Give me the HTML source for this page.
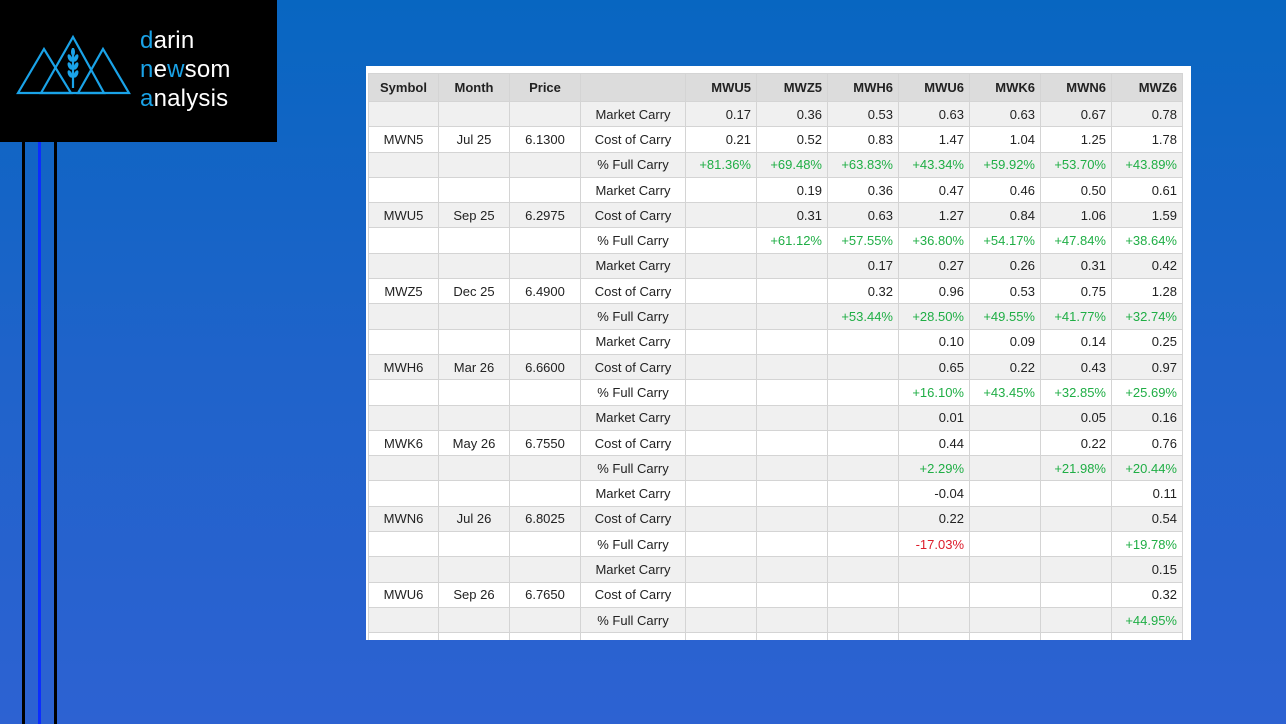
<!DOCTYPE html>
<html><head><style>
html,body{margin:0;padding:0;width:1286px;height:724px;overflow:hidden}
body{background:linear-gradient(180deg,#0866c1 0%,#1f63ca 50%,#2d62d2 100%);position:relative;font-family:"Liberation Sans",sans-serif}
.logo{position:absolute;left:0;top:0;width:277px;height:142px;background:#000}
.logo .t{position:absolute;left:140px;top:26px;color:#fff;font-size:24px;line-height:29px;letter-spacing:0.2px}
.logo .t b{font-weight:normal;color:#1aa3e8}
.v{position:absolute;top:142px;bottom:0;width:3px}
.box{position:absolute;left:366px;top:66px;width:825px;height:574px;background:#fff;overflow:hidden}
table{position:absolute;left:2px;top:7px;border-collapse:collapse;font-size:13px;color:#222;table-layout:fixed}
td,th{border:1px solid #d4d4d4;height:24.3px;padding:0 5px;white-space:nowrap}
th{background:#dcdcdc;height:27px;font-weight:bold;color:#222}
tr:nth-child(even) td{background:#f0f0f0}
td.c,th.c{text-align:center}
td.r,th.r{text-align:right}
.g{color:#1fae45}.n{color:#dd1c2a}
</style></head><body>
<div class="logo">
<svg width="140" height="142" style="position:absolute;left:0;top:0">
<g fill="none" stroke="#1aa3e8" stroke-width="2.2">
<polygon points="18,93 44,49 71,93"/>
<polygon points="41,93 73,37 104,93"/>
<polygon points="78,93 103,49 129,93"/>
<line x1="73" y1="48" x2="73" y2="88"/>
</g>
<g fill="#1aa3e8">
<ellipse cx="73" cy="52" rx="2" ry="4"/>
<ellipse cx="70" cy="58" rx="2" ry="4" transform="rotate(-25 70 58)"/><ellipse cx="76" cy="58" rx="2" ry="4" transform="rotate(25 76 58)"/>
<ellipse cx="70" cy="66" rx="2" ry="4" transform="rotate(-25 70 66)"/><ellipse cx="76" cy="66" rx="2" ry="4" transform="rotate(25 76 66)"/>
<ellipse cx="70" cy="74" rx="2" ry="4" transform="rotate(-25 70 74)"/><ellipse cx="76" cy="74" rx="2" ry="4" transform="rotate(25 76 74)"/>
</g></svg>
<div class="t"><b>d</b>arin<br><b>n</b>e<b>w</b>som<br><b>a</b>nalysis</div>
</div>
<div class="v" style="left:22px;background:#000"></div>
<div class="v" style="left:38px;background:#0b2cff"></div>
<div class="v" style="left:54px;background:#000"></div>
<div class="box">
<table>
<colgroup><col style="width:70px"><col style="width:71px"><col style="width:71px"><col style="width:105px"><col style="width:71px"><col style="width:71px"><col style="width:71px"><col style="width:71px"><col style="width:71px"><col style="width:71px"><col style="width:71px"></colgroup>
<tr><th class="c">Symbol</th><th class="c">Month</th><th class="c">Price</th><th></th><th class="r">MWU5</th><th class="r">MWZ5</th><th class="r">MWH6</th><th class="r">MWU6</th><th class="r">MWK6</th><th class="r">MWN6</th><th class="r">MWZ6</th></tr>
<tr><td></td><td></td><td></td><td class="c">Market Carry</td><td class="r">0.17</td><td class="r">0.36</td><td class="r">0.53</td><td class="r">0.63</td><td class="r">0.63</td><td class="r">0.67</td><td class="r">0.78</td></tr>
<tr><td class="c">MWN5</td><td class="c">Jul 25</td><td class="c">6.1300</td><td class="c">Cost of Carry</td><td class="r">0.21</td><td class="r">0.52</td><td class="r">0.83</td><td class="r">1.47</td><td class="r">1.04</td><td class="r">1.25</td><td class="r">1.78</td></tr>
<tr><td></td><td></td><td></td><td class="c">% Full Carry</td><td class="r g">+81.36%</td><td class="r g">+69.48%</td><td class="r g">+63.83%</td><td class="r g">+43.34%</td><td class="r g">+59.92%</td><td class="r g">+53.70%</td><td class="r g">+43.89%</td></tr>
<tr><td></td><td></td><td></td><td class="c">Market Carry</td><td></td><td class="r">0.19</td><td class="r">0.36</td><td class="r">0.47</td><td class="r">0.46</td><td class="r">0.50</td><td class="r">0.61</td></tr>
<tr><td class="c">MWU5</td><td class="c">Sep 25</td><td class="c">6.2975</td><td class="c">Cost of Carry</td><td></td><td class="r">0.31</td><td class="r">0.63</td><td class="r">1.27</td><td class="r">0.84</td><td class="r">1.06</td><td class="r">1.59</td></tr>
<tr><td></td><td></td><td></td><td class="c">% Full Carry</td><td></td><td class="r g">+61.12%</td><td class="r g">+57.55%</td><td class="r g">+36.80%</td><td class="r g">+54.17%</td><td class="r g">+47.84%</td><td class="r g">+38.64%</td></tr>
<tr><td></td><td></td><td></td><td class="c">Market Carry</td><td></td><td></td><td class="r">0.17</td><td class="r">0.27</td><td class="r">0.26</td><td class="r">0.31</td><td class="r">0.42</td></tr>
<tr><td class="c">MWZ5</td><td class="c">Dec 25</td><td class="c">6.4900</td><td class="c">Cost of Carry</td><td></td><td></td><td class="r">0.32</td><td class="r">0.96</td><td class="r">0.53</td><td class="r">0.75</td><td class="r">1.28</td></tr>
<tr><td></td><td></td><td></td><td class="c">% Full Carry</td><td></td><td></td><td class="r g">+53.44%</td><td class="r g">+28.50%</td><td class="r g">+49.55%</td><td class="r g">+41.77%</td><td class="r g">+32.74%</td></tr>
<tr><td></td><td></td><td></td><td class="c">Market Carry</td><td></td><td></td><td></td><td class="r">0.10</td><td class="r">0.09</td><td class="r">0.14</td><td class="r">0.25</td></tr>
<tr><td class="c">MWH6</td><td class="c">Mar 26</td><td class="c">6.6600</td><td class="c">Cost of Carry</td><td></td><td></td><td></td><td class="r">0.65</td><td class="r">0.22</td><td class="r">0.43</td><td class="r">0.97</td></tr>
<tr><td></td><td></td><td></td><td class="c">% Full Carry</td><td></td><td></td><td></td><td class="r g">+16.10%</td><td class="r g">+43.45%</td><td class="r g">+32.85%</td><td class="r g">+25.69%</td></tr>
<tr><td></td><td></td><td></td><td class="c">Market Carry</td><td></td><td></td><td></td><td class="r">0.01</td><td></td><td class="r">0.05</td><td class="r">0.16</td></tr>
<tr><td class="c">MWK6</td><td class="c">May 26</td><td class="c">6.7550</td><td class="c">Cost of Carry</td><td></td><td></td><td></td><td class="r">0.44</td><td></td><td class="r">0.22</td><td class="r">0.76</td></tr>
<tr><td></td><td></td><td></td><td class="c">% Full Carry</td><td></td><td></td><td></td><td class="r g">+2.29%</td><td></td><td class="r g">+21.98%</td><td class="r g">+20.44%</td></tr>
<tr><td></td><td></td><td></td><td class="c">Market Carry</td><td></td><td></td><td></td><td class="r">-0.04</td><td></td><td></td><td class="r">0.11</td></tr>
<tr><td class="c">MWN6</td><td class="c">Jul 26</td><td class="c">6.8025</td><td class="c">Cost of Carry</td><td></td><td></td><td></td><td class="r">0.22</td><td></td><td></td><td class="r">0.54</td></tr>
<tr><td></td><td></td><td></td><td class="c">% Full Carry</td><td></td><td></td><td></td><td class="r n">-17.03%</td><td></td><td></td><td class="r g">+19.78%</td></tr>
<tr><td></td><td></td><td></td><td class="c">Market Carry</td><td></td><td></td><td></td><td></td><td></td><td></td><td class="r">0.15</td></tr>
<tr><td class="c">MWU6</td><td class="c">Sep 26</td><td class="c">6.7650</td><td class="c">Cost of Carry</td><td></td><td></td><td></td><td></td><td></td><td></td><td class="r">0.32</td></tr>
<tr><td></td><td></td><td></td><td class="c">% Full Carry</td><td></td><td></td><td></td><td></td><td></td><td></td><td class="r g">+44.95%</td></tr>
<tr><td></td><td></td><td></td><td></td><td></td><td></td><td></td><td></td><td></td><td></td><td></td></tr>
</table>
</div>
</body></html>
